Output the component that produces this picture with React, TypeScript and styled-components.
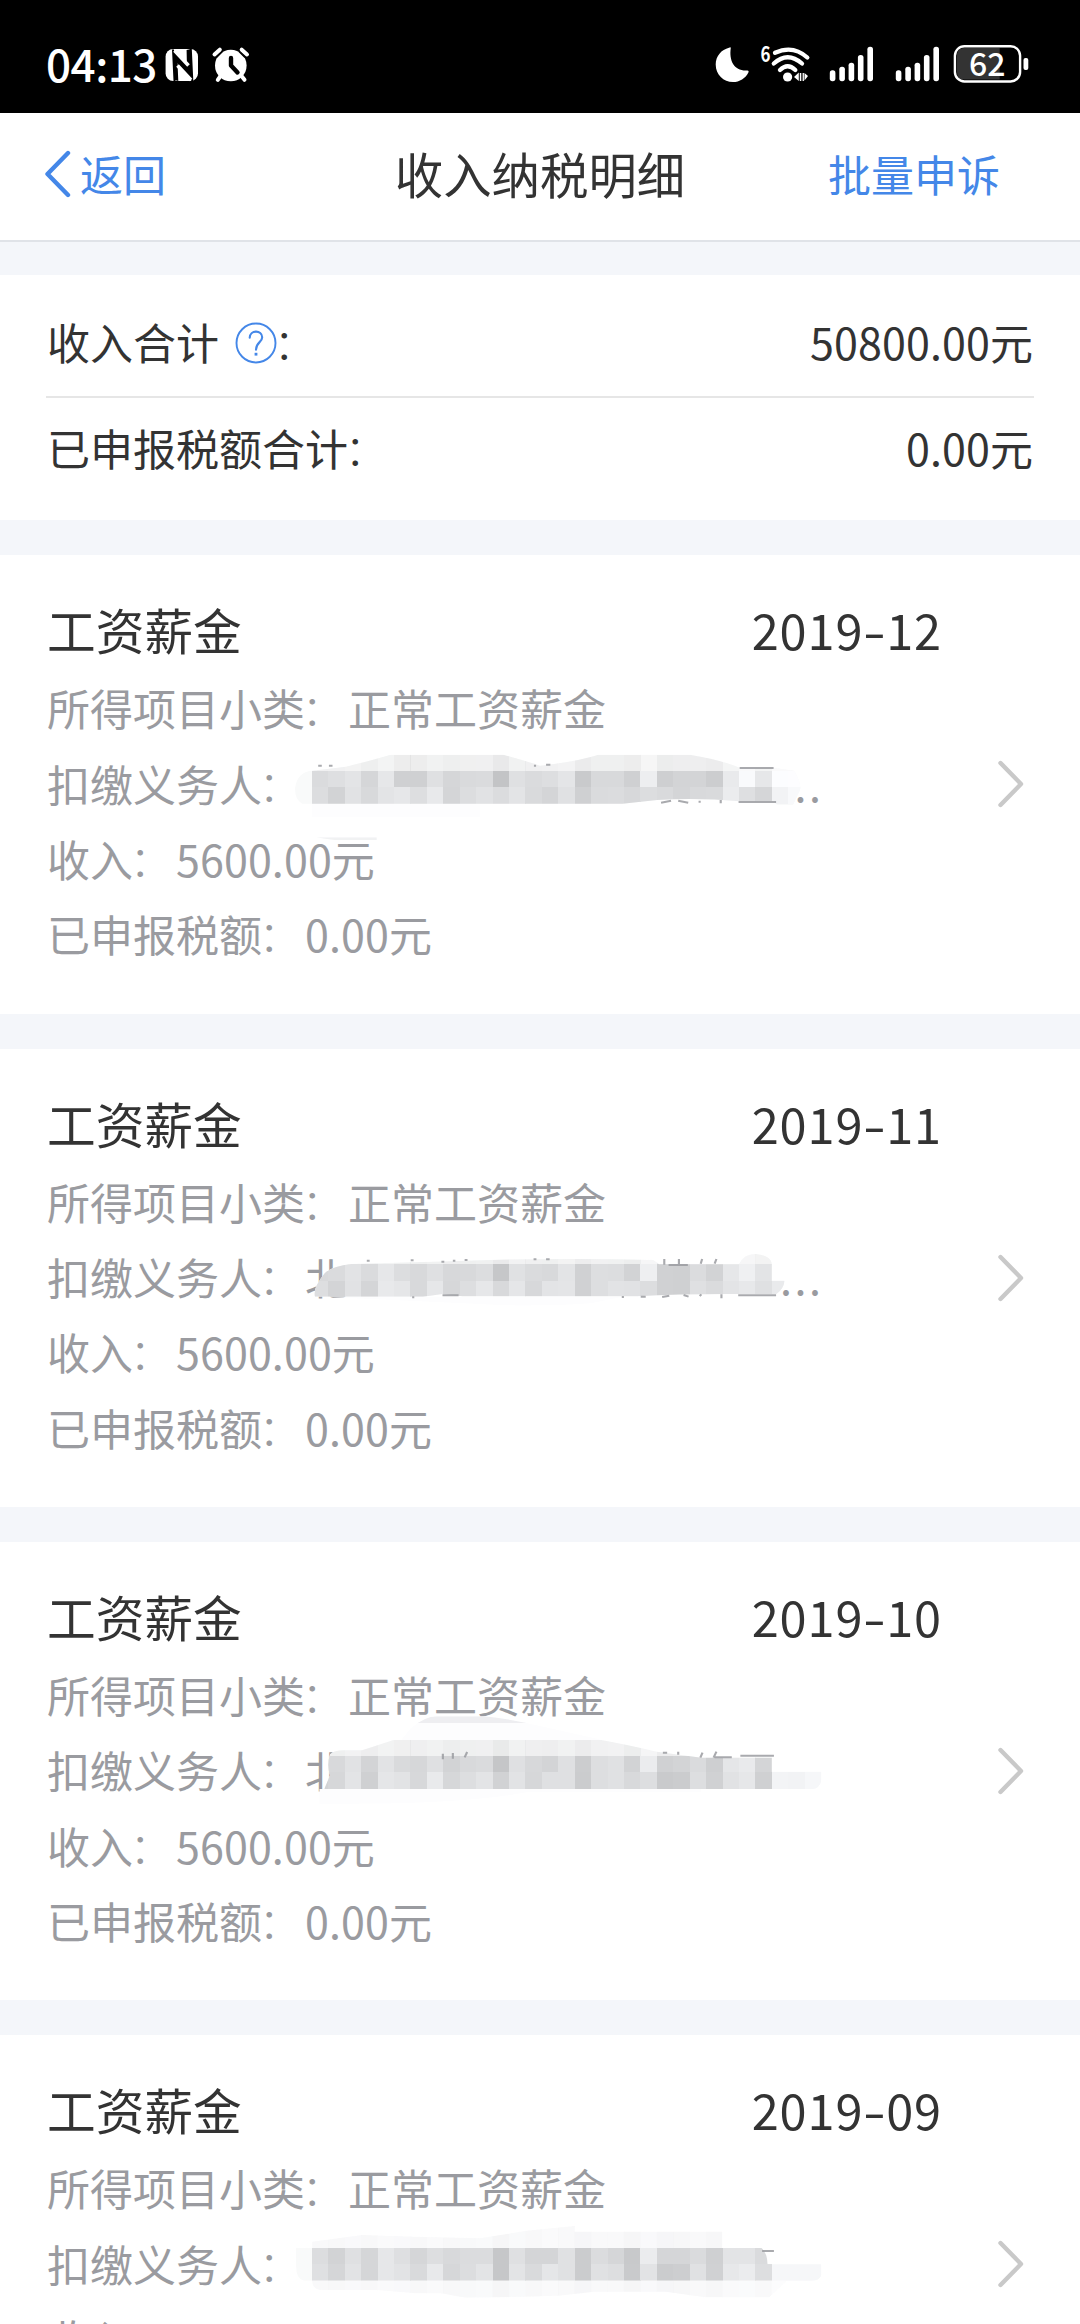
import React from 'react';
import styled, { createGlobalStyle } from 'styled-components';

const GlobalStyle = createGlobalStyle`
  * { box-sizing: border-box; }
  body {
    margin: 0;
    background: #f4f6fa;
    font-family: 'Noto Sans CJK SC', 'Noto Sans', sans-serif;
    color: #333;
  }
`;

const Screen = styled.div`
  width: 1080px;
  height: 2324px;
  overflow: hidden;
  background: #f4f6fa;
`;

/* ---------- status bar ---------- */

const StatusBar = styled.div`
  height: 113px;
  padding: 0 51px 0 46px;
  display: flex;
  align-items: center;
  justify-content: space-between;
  background: #000;
  color: #fff;
`;

const StatusGroup = styled.div`
  display: flex;
  align-items: center;
  height: 113px;
`;

const Clock = styled.span`
  width: 118px;
  font-size: 44px;
  line-height: 113px;
  font-weight: 500;
  letter-spacing: -0.5px;
  white-space: nowrap;
  padding-top: 14px;
`;

const StatusIcon = styled.svg`
  display: block;
  flex: none;
  overflow: visible;
`;

type IconProps = { x: number; w: number; children: React.ReactNode };

/* Status icons share one 113px tall coordinate space. */
const Icon = ({ x, w, children }: IconProps) => (
  <StatusIcon width={w} height={113} viewBox={`${x} 0 ${w} 113`} fill="#fff">
    {children}
  </StatusIcon>
);

const SIGNAL = [
  [829.8, 70.3],
  [839.3, 66.7],
  [848.6, 62.7],
  [857.9, 55],
  [867.4, 46.7],
];

const Signal = () => (
  <Icon x={822} w={66}>
    {SIGNAL.map(([x, y]) => (
      <rect key={x} x={x} y={y} width={5.6} height={81.2 - y} rx={2.6} />
    ))}
  </Icon>
);

const SvgText = styled.text<{ $size: number; $weight: number }>`
  font-size: ${(p) => p.$size}px;
  font-weight: ${(p) => p.$weight};
  fill: #fff;
`;

/* ---------- navigation ---------- */

const NavBar = styled.header`
  height: 129px;
  padding: 0 80px 8px 44px;
  display: grid;
  grid-template-columns: 300px 1fr 300px;
  align-items: center;
  background: #fff;
  border-bottom: 2px solid #e0e3e8;
  margin-bottom: 33px;
`;

const NavAction = styled.a<{ $end?: boolean }>`
  display: flex;
  align-items: center;
  gap: 9px;
  justify-content: ${(p) => (p.$end ? 'flex-end' : 'flex-start')};
  color: #4487e8;
  font-size: 43px;
  line-height: 60px;
  white-space: nowrap;
`;

const BackIcon = styled.svg`
  margin-top: 3px;
`;

const NavTitle = styled.h1`
  margin: 0;
  padding-left: 36px;
  text-align: center;
  font-size: 48.4px;
  line-height: 64px;
  font-weight: 400;
  white-space: nowrap;
`;

/* ---------- summary ---------- */

const Summary = styled.section`
  height: 245px;
  padding: 15px 46px 0;
  background: #fff;
  margin-bottom: 35.3px;
`;

const SummaryRow = styled.div<{ $divided?: boolean }>`
  height: ${(p) => (p.$divided ? 108 : 100)}px;
  padding: 0 1px ${(p) => (p.$divided ? 5 : 2)}px 1px;
  display: flex;
  align-items: center;
  justify-content: space-between;
  font-size: 43px;
  line-height: 64px;
  border-bottom: ${(p) => (p.$divided ? '2px solid #e6e6e6' : 'none')};
`;

const SummaryLabel = styled.span`
  display: flex;
  align-items: center;
`;

const HelpIcon = styled.svg`
  margin: 4px 0 0 16px;
`;

const Amount = styled.span`
  letter-spacing: 0.1px;
`;

const Colon = styled.span`
  margin: 0 3.5px 0 -3.5px;
  font-weight: 300;
`;

/* ---------- records ---------- */

const Record = styled.article`
  position: relative;
  height: 458.33px;
  margin-bottom: 35px;
  padding: 37px 54.5px 0 47px;
  display: flex;
  align-items: flex-start;
  justify-content: space-between;
  background: #fff;
`;

const RecordBody = styled.div`
  width: 895px;
`;

const RecordHead = styled.div`
  display: flex;
  justify-content: space-between;
  font-size: 48.7px;
  line-height: 75px;
  height: 78px;
`;

const Period = styled.span`
  display: flex;
  letter-spacing: 0.9px;
`;

const Dash = styled.span`
  margin: 0 2px 0 3px;
  transform: scaleX(1.35);
`;

const Detail = styled.div`
  display: flex;
  height: 75.3px;
  font-size: 43px;
  line-height: 75.3px;
  color: #9a9ba0;
  white-space: nowrap;
`;

const PayerName = styled.span`
  width: 475px;
`;

const Ellipsis = styled.span`
  letter-spacing: 2.6px;
`;

const Chevron = styled.svg`
  align-self: center;
  margin-top: -37px;
`;

const Mosaic = styled.svg`
  position: absolute;
  left: 280px;
  top: 165px;
`;

type Mask = {
  outline: string;
  top: string;
  bottom: string;
  y: number;
  halo: string;
  strokes: string;
};

type RecordData = { period: string; head: string; tail: string; mask: Mask };

const RECORDS: RecordData[] = [
  {
    period: '2019-12',
    head: '',
    tail: '...',
    mask: {
      y: 152,
      outline:
        'M42 205Q48 155 90 152L185 140Q260 120 310 104H625Q680 120 728 137Q830 125 892 104H1147Q1230 118 1287 143H1383L1440 152Q1462 195 1456 210L1436 256L1392 256L1383 244H1287Q1170 232 1056 240L959 251H62Q42 240 42 205Z',
      top: 'dadee3d5e6cfcfdfd5d9dac3dfdadde4c9d8d8cfedced3d3cce9f9e6fcfdfd',
      bottom: 'dcd2e1d8e3e6dde8d4dce1dbe3d9d4e0cfdadbd7dcd9d4d8d9ebded5f2f8fc',
      halo: 'M88 251H560V290H88ZM101 352H271V362Q180 368 101 352Z',
      strokes: 'M107 137h10M137 137h10M711 137h6M745 134h12M1287 144h95M1067 248l28 -6M1115 242l28 6M1175 242v6M1234 240v10M1284 246h105',
    },
  },
  {
    period: '2019-11',
    head: '北',
    tail: '...',
    mask: {
      y: 151,
      outline:
        'M98 248Q90 225 125 178Q145 156 200 150L480 142Q760 130 1045 138L1062 151H1285Q1300 118 1333 120Q1375 125 1377 150V200H1413Q1410 225 1390 240H1250Q1110 240 1000 247L510 247L455 240L400 248Z',
      top: 'd8dae2dae6dcd8dfd7d8dcc6e0dad8e3d0dddcd2eed0cfdbd2e6efe3f2f2f2',
      bottom: 'ddd3e1d4e8e5d8e6d6dde6d8e5d7e3e4d0dde2e1dcd0cfdfdae3e7dfe9eeee',
      halo: 'M120 248H960L870 268Q700 280 560 270Z',
      strokes: 'M243 140h8M366 139h8M452 143h8M484 140h7M517 138h8M710 136h8M745 136h10M1076 135v17M1117 135v17M1182 135l-4 14M1222 135l-5 14M1088 153h54M455 244h45M1070 249l20 -4M1130 243l14 5M1180 241l-5 5M1236 241v12M1283 244h106M957 249h6M1010 248h14M370 250h6',
    },
  },
  {
    period: '2019-10',
    head: '北',
    tail: '',
    mask: {
      y: 147,
      outline:
        'M124 246L140 205Q130 175 140 142Q150 130 180 130H230L320 98H895Q970 112 1055 134L1180 152H1377V194H1516V220Q1510 246 1490 246Z',
      top: 'd8d8e1d3e2d9d6dfd2d8dac5dfd7d3dfccdde0d2ebd0d3dacee5e9d4ffffff',
      bottom: 'd2d6e3cfe5e2d7e9d6dde3d1e2d6dfdfcbdde0d8ddc9cbddd0e1e6cff3f2f6',
      halo: 'M365 65Q405 28 440 28H570Q630 34 690 48L900 98H340ZM110 246H1180V256H690Q500 295 110 290Z',
      strokes: 'M456 140v17M484 138v17M524 135l-7 16M1072 137h12M1115 134v9M1183 137l-6 15M1222 134l-8 18M1217 151h48M1289 146h94',
    },
  },
  {
    period: '2019-09',
    head: '',
    tail: '',
    mask: {
      y: 144,
      outline: 'M45 144H1348Q1365 160 1365 193H1516V225Q1510 242 1490 242H67Q45 235 45 200Z',
      top: 'dcd2dfd5e6ded5ddd8dbdbc6dfd4d4e0cbdbd5c8ebd5d5dacfe3e3daffffff',
      bottom: 'dfd5e2d5e6e2d9e8d6dce3c6e3d9e5e0cbe0ddc9e2cbcde0d0e7ebddf6f6f6',
      halo: 'M90 242H1420L1370 292H1190L1080 275H880L780 287Q650 292 520 293L450 280H380L270 270H120Q90 270 90 242ZM90 144V125L230 105L380 110L560 115L690 92L825 78V95H1238V144Z',
      strokes: 'M1350 153h33',
    },
  },
];

const CELL = 46;

const shadeAt = (row: string, i: number) => {
  const hex = row.slice(i * 2, i * 2 + 2);
  const value = parseInt(hex, 16);
  return `rgb(${value}, ${value + (value < 253 ? 1 : 0)}, ${Math.min(255, value + 3)})`;
};

const PayerMosaic = ({ id, mask }: { id: string; mask: Mask }) => {
  const columns = Array.from({ length: 31 }, (_, i) => i);
  return (
    <Mosaic width="560" height="120" viewBox="0 0 1568 360" preserveAspectRatio="none">
      <defs>
        <clipPath id={`outline-${id}`}>
          <path d={mask.outline} />
        </clipPath>
        <clipPath id={`halo-${id}`}>
          <path d={mask.halo} />
        </clipPath>
      </defs>
      <g clipPath={`url(#halo-${id})`}>
        <rect width="1568" height="360" fill="#fdfdfe" />
        {id === '2019-09' &&
          columns.map((i) => (
            <rect key={i} x={89 + i * CELL} y={60} width={CELL + 0.5} height={240} fill={shadeAt(mask.bottom, i)} opacity={0.13} />
          ))}
        {id === '2019-10' && <rect x="365" y="20" width="340" height="28" fill="#eeeef1" />}
        {id === '2019-12' && <rect x="101" y="352" width="170" height="16" fill="#f1f2f3" />}
      </g>
      <g clipPath={`url(#outline-${id})`} shapeRendering="crispEdges">
        <rect width="1568" height="360" fill="#f9fafa" />
        {columns.map((i) => (
          <React.Fragment key={i}>
            <rect x={89 + i * CELL} y={mask.y - 49} width={CELL + 0.5} height={50} fill={shadeAt(mask.top, i)} opacity={0.3} />
            <rect x={89 + i * CELL} y={mask.y} width={CELL + 0.5} height={49.5} fill={shadeAt(mask.top, i)} />
            <rect x={89 + i * CELL} y={mask.y + 49} width={CELL + 0.5} height={49.5} fill={shadeAt(mask.bottom, i)} />
          </React.Fragment>
        ))}
      </g>
      <path d={mask.strokes} fill="none" stroke="#9a9ba0" strokeWidth="6" opacity="0.85" />
    </Mosaic>
  );
};

const RecordCard = ({ period, head, tail, mask }: RecordData) => {
  const [year, month] = period.split('-');
  return (
    <Record>
      <RecordBody>
        <RecordHead>
          <span>工资薪金</span>
          <Period>
            {year}
            <Dash>-</Dash>
            {month}
          </Period>
        </RecordHead>
        <Detail>
          所得项目小类<Colon>：</Colon>正常工资薪金
        </Detail>
        <Detail>
          扣缴义务人<Colon>：</Colon>
          <PayerName>{head}</PayerName>
          <Ellipsis>{tail}</Ellipsis>
        </Detail>
        <Detail>
          收入<Colon>：</Colon>
          <Amount>5600.00元</Amount>
        </Detail>
        <Detail>
          已申报税额<Colon>：</Colon>
          <Amount>0.00元</Amount>
        </Detail>
      </RecordBody>
      <PayerMosaic id={period} mask={mask} />
      <Chevron width="30" height="50" viewBox="0 0 30 50" fill="none">
        <path d="M4.5 4L25 25L4.5 46" stroke="#c9c9c9" strokeWidth="4.4" strokeLinecap="round" strokeLinejoin="round" />
      </Chevron>
    </Record>
  );
};

export default function App() {
  return (
    <Screen>
      <GlobalStyle />
      <StatusBar>
        <StatusGroup>
          <Clock>04:13</Clock>
          <Icon x={164} w={40}>
            <rect x="165.6" y="49" width="32.4" height="32" rx="7.5" />
            <path d="M173 49.5L174.500 81M190.800 49L192.300 81" stroke="#000" strokeWidth="2" fill="none" />
            <path d="M173 50L187 64V73L177.500 63L178.300 81L174.500 80Z" fill="#000" />
            <path d="M190.800 49L191.800 80.500L177.500 66V60.500L187 69.500L186.600 50Z" fill="#000" />
            <path d="M174.500 50.500L188.500 65.500M177.500 65.500L191 80" stroke="#fff" strokeWidth="3.600" fill="none" />
          </Icon>
          <Icon x={204} w={50}>
            <circle cx="230.800" cy="65.500" r="15.800" />
            <path d="M214.500 54.500L219.800 49.700M247 54.500L241.700 49.700M220.500 76L217.800 79.800M241.500 76L244.500 79.800" stroke="#fff" strokeWidth="4" strokeLinecap="round" fill="none" />
            <path d="M216.500 57.500L222.500 51.500M245 57.500L239 51.500" stroke="#000" strokeWidth="1.400" fill="none" />
            <path d="M231 58V65.500L237.500 72.500" stroke="#000" strokeWidth="4.400" strokeLinecap="round" strokeLinejoin="round" fill="none" />
          </Icon>
        </StatusGroup>
        <StatusGroup>
          <Icon x={712} w={44}>
            <path d="M730.800 47.800C728.800 61.500 734.500 71.500 747.500 70.500Q749.200 70.600 748.500 72.200C745.500 78.500 739.500 82 733 82C723.500 82 715.700 74.600 715.700 64.500C715.700 56 721.500 49.500 729 47.700Q730.800 47 730.800 47.800Z" />
          </Icon>
          <Icon x={756} w={66}>
            <SvgText x="760.500" y="61.500" textLength="10" lengthAdjust="spacingAndGlyphs" $size={21.5} $weight={700}>
              6
            </SvgText>
            <g fill="none" stroke="#fff" strokeWidth="4.300" strokeLinecap="round">
              <path d="M775 52.800Q793 44.500 807.300 57.500" />
              <path d="M773.800 63.500Q787.600 51 802 63.500" />
              <path d="M780 70Q787.500 62.500 795.300 70" />
            </g>
            <circle cx="787.600" cy="77" r="4.600" />
            <path d="M794 77L798.800 72.500V81ZM799.800 73H801.300V81H799.800ZM802.600 73H803.900V81H802.600ZM804.500 73L808 76L804.500 80.500Z" />
          </Icon>
          <Signal />
          <Signal />
          <Icon x={954} w={75}>
            <path d="M964 48H999.700V79.500H964Q957 79.500 957 72V56Q957 48 964 48Z" fill="#333" />
            <rect x="954.900" y="46.200" width="65.200" height="35.300" rx="9.500" fill="none" stroke="#fff" strokeWidth="2.400" />
            <rect x="1023.500" y="58" width="4.800" height="12" rx="2" />
            <SvgText x="969" y="76.200" textLength="36.500" lengthAdjust="spacingAndGlyphs" $size={32} $weight={500}>
              62
            </SvgText>
          </Icon>
        </StatusGroup>
      </StatusBar>

      <NavBar>
        <NavAction>
          <BackIcon width="27" height="50" viewBox="0 0 27 50" fill="none">
            <path d="M24 4L3.500 25L24 46" stroke="#4487e8" strokeWidth="4.400" strokeLinecap="round" strokeLinejoin="round" />
          </BackIcon>
          返回
        </NavAction>
        <NavTitle>收入纳税明细</NavTitle>
        <NavAction $end>批量申诉</NavAction>
      </NavBar>

      <Summary>
        <SummaryRow $divided>
          <SummaryLabel>
            收入合计
            <HelpIcon width="42" height="42" viewBox="0 0 42 42" fill="none" stroke="#4487e8">
              <circle cx="21" cy="21" r="19.500" strokeWidth="1.900" />
              <path d="M14.700 15.800C14.700 7.600 27.200 7.600 27.200 15.300C27.200 20.500 21 20 21 27.800" strokeWidth="2.100" strokeLinecap="round" />
              <rect x="20.300" y="31.500" width="1.400" height="1.400" strokeWidth="1.400" />
            </HelpIcon>
            <Colon>：</Colon>
          </SummaryLabel>
          <Amount>50800.00元</Amount>
        </SummaryRow>
        <SummaryRow>
          <SummaryLabel>
            已申报税额合计<Colon>：</Colon>
          </SummaryLabel>
          <Amount>0.00元</Amount>
        </SummaryRow>
      </Summary>

      {RECORDS.map((record) => (
        <RecordCard key={record.period} {...record} />
      ))}
    </Screen>
  );
}
